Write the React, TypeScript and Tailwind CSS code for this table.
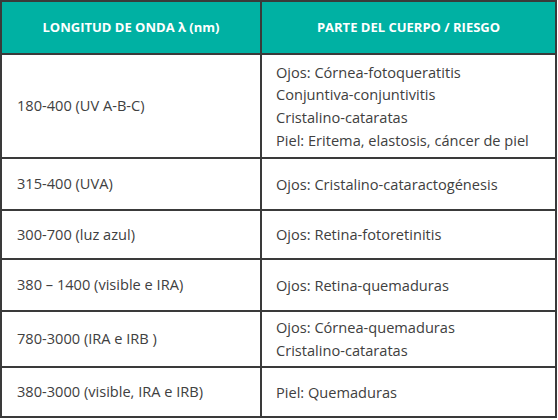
import React from "react";

const rows: { left: string; right: string[]; h: string }[] = [
  { left: "180-400 (UV A-B-C)", right: ["Ojos: Córnea-fotoqueratitis", "Conjuntiva-conjuntivitis", "Cristalino-cataratas", "Piel: Eritema, elastosis, cáncer de piel"], h: "h-[102px]" },
  { left: "315-400 (UVA)", right: ["Ojos: Cristalino-cataractogénesis"], h: "h-[50px]" },
  { left: "300-700 (luz azul)", right: ["Ojos: Retina-fotoretinitis"], h: "h-[47px]" },
  { left: "380 – 1400 (visible e IRA)", right: ["Ojos: Retina-quemaduras"], h: "h-[50px]" },
  { left: "780-3000 (IRA e IRB )", right: ["Ojos: Córnea-quemaduras", "Cristalino-cataratas"], h: "h-[54px]" },
  { left: "380-3000 (visible, IRA e IRB)", right: ["Piel: Quemaduras"], h: "h-[48px]" },
];

export default function App() {
  return (
    <div className="w-[558px] h-[420px] bg-white" style={{ fontFamily: "'Open Sans', sans-serif" }}>
      <div className="w-[557px] border-2 border-[#3a3a3a] flex flex-col">
        <div className="flex border-b-2 border-[#3a3a3a] bg-[#00b1a3] text-white font-bold text-[13px]">
          <div className="w-[260px] h-[51px] flex items-center justify-center border-r-2 border-[#3a3a3a]">
            LONGITUD DE ONDA λ (nm)
          </div>
          <div className="flex-1 flex items-center justify-center">PARTE DEL CUERPO / RIESGO</div>
        </div>
        {rows.map((r, i) => (
          <div key={i} className={`flex text-[#404040] text-[14.6px] ${i < rows.length - 1 ? "border-b-2 border-[#3a3a3a]" : ""}`}>
            <div className={`w-[260px] ${r.h} flex items-center pl-[15px] border-r-2 border-[#3a3a3a]`}>{r.left}</div>
            <div className={`flex-1 ${r.h} flex flex-col justify-center pl-[14px] leading-[22.7px]`}>
              {r.right.map((t, j) => (
                <div key={j}>{t}</div>
              ))}
            </div>
          </div>
        ))}
      </div>
    </div>
  );
}
